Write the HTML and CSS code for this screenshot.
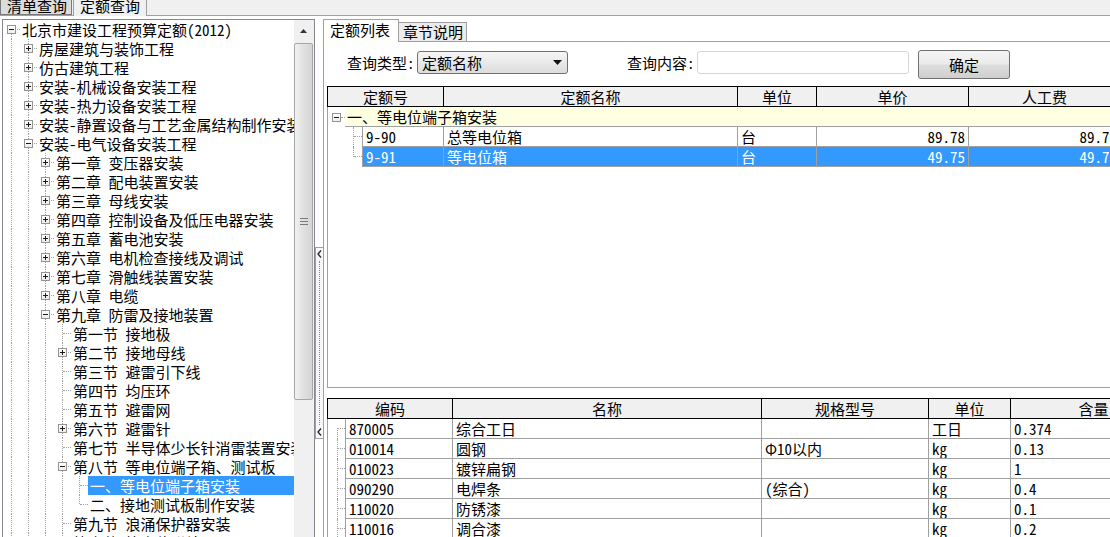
FILE: index.html
```html
<!DOCTYPE html>
<html lang="zh-CN">
<head>
<meta charset="utf-8">
<title>定额查询</title>
<link rel="stylesheet" href="styles.css">
</head>
<body>
<div class="topbar">
  <div class="ttab ttab-off">清单查询</div>
  <div class="ttab ttab-on">定额查询</div>
</div>
<div class="main">
  <div class="left">
    <div class="tree">
      <div class="row"><span class="c first"><b class="bx"></b></span><span class="lbl">北京市建设工程预算定额(2012)</span></div>
      <div class="row"><i class="g"></i><span class="c"><b class="bx plus"></b></span><span class="lbl">房屋建筑与装饰工程</span></div>
      <div class="row"><i class="g"></i><span class="c"><b class="bx plus"></b></span><span class="lbl">仿古建筑工程</span></div>
      <div class="row"><i class="g"></i><span class="c"><b class="bx plus"></b></span><span class="lbl">安装-机械设备安装工程</span></div>
      <div class="row"><i class="g"></i><span class="c"><b class="bx plus"></b></span><span class="lbl">安装-热力设备安装工程</span></div>
      <div class="row"><i class="g"></i><span class="c"><b class="bx plus"></b></span><span class="lbl">安装-静置设备与工艺金属结构制作安装工程</span></div>
      <div class="row"><i class="g"></i><span class="c"><b class="bx"></b></span><span class="lbl">安装-电气设备安装工程</span></div>
      <div class="row"><i class="g"></i><i class="g"></i><span class="c"><b class="bx plus"></b></span><span class="lbl">第一章 变压器安装</span></div>
      <div class="row"><i class="g"></i><i class="g"></i><span class="c"><b class="bx plus"></b></span><span class="lbl">第二章 配电装置安装</span></div>
      <div class="row"><i class="g"></i><i class="g"></i><span class="c"><b class="bx plus"></b></span><span class="lbl">第三章 母线安装</span></div>
      <div class="row"><i class="g"></i><i class="g"></i><span class="c"><b class="bx plus"></b></span><span class="lbl">第四章 控制设备及低压电器安装</span></div>
      <div class="row"><i class="g"></i><i class="g"></i><span class="c"><b class="bx plus"></b></span><span class="lbl">第五章 蓄电池安装</span></div>
      <div class="row"><i class="g"></i><i class="g"></i><span class="c"><b class="bx plus"></b></span><span class="lbl">第六章 电机检查接线及调试</span></div>
      <div class="row"><i class="g"></i><i class="g"></i><span class="c"><b class="bx plus"></b></span><span class="lbl">第七章 滑触线装置安装</span></div>
      <div class="row"><i class="g"></i><i class="g"></i><span class="c"><b class="bx plus"></b></span><span class="lbl">第八章 电缆</span></div>
      <div class="row"><i class="g"></i><i class="g"></i><span class="c"><b class="bx"></b></span><span class="lbl">第九章 防雷及接地装置</span></div>
      <div class="row"><i class="g"></i><i class="g"></i><i class="g"></i><span class="c"></span><span class="lbl">第一节 接地极</span></div>
      <div class="row"><i class="g"></i><i class="g"></i><i class="g"></i><span class="c"><b class="bx plus"></b></span><span class="lbl">第二节 接地母线</span></div>
      <div class="row"><i class="g"></i><i class="g"></i><i class="g"></i><span class="c"></span><span class="lbl">第三节 避雷引下线</span></div>
      <div class="row"><i class="g"></i><i class="g"></i><i class="g"></i><span class="c"></span><span class="lbl">第四节 均压环</span></div>
      <div class="row"><i class="g"></i><i class="g"></i><i class="g"></i><span class="c"></span><span class="lbl">第五节 避雷网</span></div>
      <div class="row"><i class="g"></i><i class="g"></i><i class="g"></i><span class="c"><b class="bx plus"></b></span><span class="lbl">第六节 避雷针</span></div>
      <div class="row"><i class="g"></i><i class="g"></i><i class="g"></i><span class="c"></span><span class="lbl">第七节 半导体少长针消雷装置安装</span></div>
      <div class="row"><i class="g"></i><i class="g"></i><i class="g"></i><span class="c"><b class="bx"></b></span><span class="lbl">第八节 等电位端子箱、测试板</span></div>
      <div class="row"><i class="g"></i><i class="g"></i><i class="g"></i><i class="g"></i><span class="c"></span><span class="lbl sel">一、等电位端子箱安装</span></div>
      <div class="row"><i class="g"></i><i class="g"></i><i class="g"></i><i class="g"></i><span class="c last"></span><span class="lbl">二、接地测试板制作安装</span></div>
      <div class="row"><i class="g"></i><i class="g"></i><i class="g"></i><span class="c"></span><span class="lbl">第九节 浪涌保护器安装</span></div>
      <div class="row"><i class="g"></i><i class="g"></i><i class="g"></i><span class="c"></span><span class="lbl">第十节 等电位联结</span></div>
    </div>
    <div class="sb">
      <div class="sb-up"><svg width="7" height="4" viewBox="0 0 7 4"><polygon points="0,4 7,4 3.5,0" fill="#333"/></svg></div>
      <div class="sb-thumb"><svg width="8" height="7" viewBox="0 0 8 7"><path d="M0 0.5H8M0 3.5H8M0 6.5H8" stroke="#7a7a7a" stroke-width="1"/></svg></div>
      <div class="sb-track"></div>
    </div>
  </div>
  <div class="splitter">
    <div class="split-box">
      <svg class="chev" width="5" height="8" viewBox="0 0 5 8"><polyline points="4,0.5 1,4 4,7.5" fill="none" stroke="#222" stroke-width="1.3"/></svg>
      <div class="split-dots"></div>
      <svg class="chev" width="5" height="8" viewBox="0 0 5 8"><polyline points="4,0.5 1,4 4,7.5" fill="none" stroke="#222" stroke-width="1.3"/></svg>
    </div>
  </div>
  <div class="right">
    <div class="rtabs">
      <div class="rt-on">定额列表</div>
      <div class="rt-off">章节说明</div>
    </div>
    <div class="rcontent">
      <div class="query">
        <div class="qlabel">查询类型:</div>
        <div class="select"><span>定额名称</span><svg width="9" height="5" viewBox="0 0 9 5"><polygon points="0,0 9,0 4.5,5" fill="#111"/></svg></div>
        <div class="qlabel qlabel2">查询内容:</div>
        <div class="input"></div>
        <div class="btn">确定</div>
      </div>

      <div class="tgrid">
        <div class="hdr">
          <div class="tc1">定额号</div>
          <div class="tc2">定额名称</div>
          <div class="tc3">单位</div>
          <div class="tc4">单价</div>
          <div class="tc5">人工费</div>
        </div>
        <div class="trow">
          <div class="gut-grp"><b class="bx"></b></div>
          <div class="grp">一、等电位端子箱安装</div>
        </div>
        <div class="trow">
          <div class="gut2"></div>
          <div class="cell tc1 dl">9-90</div>
          <div class="cell tc2">总等电位箱</div>
          <div class="cell tc3">台</div>
          <div class="cell tc4 num">89.78</div>
          <div class="cell tc5 num">89.78</div>
        </div>
        <div class="trow sel">
          <div class="gut2 last"></div>
          <div class="cell tc1 dl">9-91</div>
          <div class="cell tc2">等电位箱</div>
          <div class="cell tc3">台</div>
          <div class="cell tc4 num">49.75</div>
          <div class="cell tc5 num">49.75</div>
        </div>
        <div class="tfill"></div>
      </div>

      <div class="bgrid">
        <div class="hdr">
          <div class="bc1">编码</div>
          <div class="bc2">名称</div>
          <div class="bc3">规格型号</div>
          <div class="bc4">单位</div>
          <div class="bc5">含量</div>
        </div>
        <div class="trow">
          <div class="gut1 first"></div>
          <div class="cell bc1 dl">870005</div>
          <div class="cell bc2">综合工日</div>
          <div class="cell bc3"></div>
          <div class="cell bc4">工日</div>
          <div class="cell bc5">0.374</div>
        </div>
        <div class="trow">
          <div class="gut1"></div>
          <div class="cell bc1 dl">010014</div>
          <div class="cell bc2">圆钢</div>
          <div class="cell bc3">Φ10以内</div>
          <div class="cell bc4">kg</div>
          <div class="cell bc5">0.13</div>
        </div>
        <div class="trow">
          <div class="gut1"></div>
          <div class="cell bc1 dl">010023</div>
          <div class="cell bc2">镀锌扁钢</div>
          <div class="cell bc3"></div>
          <div class="cell bc4">kg</div>
          <div class="cell bc5">1</div>
        </div>
        <div class="trow">
          <div class="gut1"></div>
          <div class="cell bc1 dl">090290</div>
          <div class="cell bc2">电焊条</div>
          <div class="cell bc3">(综合)</div>
          <div class="cell bc4">kg</div>
          <div class="cell bc5">0.4</div>
        </div>
        <div class="trow">
          <div class="gut1"></div>
          <div class="cell bc1 dl">110020</div>
          <div class="cell bc2">防锈漆</div>
          <div class="cell bc3"></div>
          <div class="cell bc4">kg</div>
          <div class="cell bc5">0.1</div>
        </div>
        <div class="trow">
          <div class="gut1"></div>
          <div class="cell bc1 dl">110016</div>
          <div class="cell bc2">调合漆</div>
          <div class="cell bc3"></div>
          <div class="cell bc4">kg</div>
          <div class="cell bc5">0.2</div>
        </div>
      </div>
    </div>
  </div>
</div>
</body>
</html>
```
FILE: styles.css
```css
* { box-sizing: border-box; }
html, body { margin: 0; padding: 0; }
body {
  width: 1110px;
  height: 537px;
  overflow: hidden;
  background: #fff;
  color: #000;
  font-family: "Noto Sans Mono CJK SC", "Noto Sans CJK SC", sans-serif;
  font-size: 15px;
}

/* top tab bar */
.topbar {
  height: 16px;
  background: #f0f0f0;
  border-bottom: 1px solid #a0a0a0;
  display: flex;
  align-items: flex-start;
}
.ttab {
  height: 15px;
  line-height: 11px;
  white-space: nowrap;
  overflow: hidden;
  flex: none;
}
.ttab-off {
  width: 72px;
  padding-left: 6px;
  background: #dcdcdc;
  border: 1px solid #7a7a7a;
  border-top: none;
}
.ttab-on {
  width: 74px;
  height: 16px;
  margin-left: 1px;
  padding-left: 6px;
  background: #f0f0f0;
  border-left: 1px solid #a0a0a0;
  border-right: 1px solid #a0a0a0;
}

.main {
  display: flex;
  height: 521px;
  padding-top: 3px;
}

/* left tree */
.left {
  flex: none;
  margin-left: 2px;
  width: 313px;
  border: 1px solid #828790;
  border-bottom: none;
  display: flex;
}
.tree {
  width: 291px;
  flex: none;
  overflow: hidden;
  background: #fff;
}
.row {
  display: flex;
  height: 19px;
  line-height: 19px;
  white-space: nowrap;
}
.g, .c {
  flex: none;
  width: 17px;
  position: relative;
}
.g::before, .c::before {
  content: "";
  position: absolute;
  left: 8px;
  top: 0;
  bottom: 0;
  border-left: 1px dotted #a0a0a0;
}
.c.first::before { top: 9px; }
.c.last::before { bottom: 10px; }
.c::after {
  content: "";
  position: absolute;
  left: 9px;
  right: 0;
  top: 9px;
  border-top: 1px dotted #a0a0a0;
}
.bx {
  position: absolute;
  left: 4px;
  top: 5px;
  width: 9px;
  height: 9px;
  border: 1px solid #949494;
  background: linear-gradient(#ffffff, #ececec);
  z-index: 1;
}
.bx::before {
  content: "";
  position: absolute;
  left: 1px;
  top: 3px;
  width: 5px;
  height: 1px;
  background: #1a1a1a;
}
.bx.plus::after {
  content: "";
  position: absolute;
  left: 3px;
  top: 1px;
  width: 1px;
  height: 5px;
  background: #1a1a1a;
}
.lbl { padding: 0 2px; }
.lbl.sel {
  flex: 1;
  background: #3399ff;
  color: #fff;
}

/* scrollbar */
.sb {
  width: 20px;
  flex: none;
  background: #f0f0f0;
  display: flex;
  flex-direction: column;
}
.sb-up {
  height: 22px;
  display: flex;
  align-items: center;
  justify-content: center;
  padding-right: 1px;
}
.sb-thumb {
  margin-top: 1px;
  margin-right: 1px;
  height: 357px;
  border: 1px solid #a6a6a6;
  border-radius: 2px;
  background: linear-gradient(to right, #f2f2f2, #e3e3e3 40%, #d4d4d4);
  display: flex;
  align-items: center;
  justify-content: center;
}
.sb-track { flex: 1; }

/* splitter */
.splitter {
  width: 8px;
  flex: none;
}
.split-box {
  margin-top: 228px;
  height: 192px;
  border: 1px solid #a0a0a0;
  border-right: none;
  background: #f7f7f7;
  display: flex;
  flex-direction: column;
  align-items: center;
  padding: 2px 0;
}
.chev { flex: none; }
.split-dots {
  flex: 1;
  margin: 3px 0;
  border-left: 1px dotted #5b8fd0;
}

/* right panel */
.right {
  flex: 1;
  min-width: 0;
  display: flex;
  flex-direction: column;
  overflow: hidden;
}
.rtabs {
  display: flex;
  align-items: flex-end;
  height: 22px;
  flex: none;
}
.rt-on {
  width: 76px;
  height: 23px;
  margin-bottom: -1px;
  padding-left: 6px;
  line-height: 20px;
  border: 1px solid #a0a0a0;
  border-bottom: none;
  background: #fff;
  position: relative;
  z-index: 1;
  white-space: nowrap;
}
.rt-off {
  width: 68px;
  height: 19px;
  padding-left: 4px;
  line-height: 18px;
  border: 1px solid #a0a0a0;
  border-left: none;
  border-bottom: none;
  background: #ececec;
  white-space: nowrap;
}
.rcontent {
  flex: 1;
  border-left: 1px solid #a0a0a0;
  border-top: 1px solid #a0a0a0;
  background: #fff;
  padding-left: 3px;
}

.query {
  display: flex;
  align-items: flex-start;
  margin-top: 8px;
  height: 29px;
  padding-left: 20px;
}
.qlabel {
  width: 70px;
  flex: none;
  margin-top: 1px;
  line-height: 23px;
  white-space: nowrap;
}
.qlabel2 { margin-left: 59px; }
.select {
  flex: none;
  width: 151px;
  height: 23px;
  margin-top: 1px;
  border: 1px solid #707070;
  border-radius: 3px;
  background: linear-gradient(#f6f6f6, #e9e9e9 50%, #dcdcdc);
  display: flex;
  align-items: center;
  justify-content: space-between;
  padding: 0 5px 0 4px;
  line-height: 21px;
}
.input {
  flex: none;
  width: 212px;
  height: 23px;
  margin-top: 1px;
  border: 1px solid #d6d6d6;
  border-radius: 3px;
  background: #fff;
}
.btn {
  flex: none;
  width: 92px;
  height: 29px;
  margin-left: 9px;
  border: 1px solid #707070;
  border-radius: 3px;
  background: linear-gradient(#f4f4f4, #ebebeb 48%, #dddddd 52%, #cfcfcf);
  text-align: center;
  line-height: 27px;
}

/* grids */
.tgrid {
  margin-top: 7px;
  width: 900px;
  height: 302px;
  display: flex;
  flex-direction: column;
  border-bottom: 1px solid #a0a0a0;
}
.bgrid {
  margin-top: 10px;
  width: 900px;
  display: flex;
  flex-direction: column;
}
.hdr {
  flex: none;
  display: flex;
  height: 21px;
  border: 1px solid #000;
  border-right: none;
  background: #f0f0f0;
}
.hdr > div {
  flex: none;
  border-right: 1px solid #000;
  text-align: center;
  line-height: 19px;
  white-space: nowrap;
}
.trow {
  flex: none;
  display: flex;
  height: 20px;
  border-left: 1px solid #a0a0a0;
}
.cell {
  flex: none;
  border-right: 1px solid #a0a0a0;
  border-bottom: 1px solid #a0a0a0;
  line-height: 19px;
  padding: 0 3px;
  white-space: nowrap;
  overflow: hidden;
}
.cell.dl { border-left: 1px solid #a0a0a0; }
.num { text-align: right; }

.hdr .tc1 { width: 116px; }
.tc2 { width: 294px; }
.tc3 { width: 79px; }
.tc4 { width: 152px; }
.tc5 { width: 152px; }
.cell.tc1 { width: 82px; }

.hdr .bc1 { width: 125px; }
.bc2 { width: 309px; }
.bc3 { width: 167px; }
.bc4 { width: 82px; }
.bc5 { width: 166px; }
.cell.bc1 { width: 108px; }

.trow.sel .cell {
  background: #3399ff;
  color: #fff;
}

.gut-grp {
  flex: none;
  width: 17px;
  position: relative;
}
.gut-grp::after {
  content: "";
  position: absolute;
  left: 13px;
  right: 0;
  top: 10px;
  border-top: 1px dotted #a0a0a0;
}
.gut-grp .bx { top: 6px; left: 4px; }
.grp {
  flex: 1;
  background: #ffffe1;
  border-bottom: 1px solid #a0a0a0;
  line-height: 19px;
  padding-left: 2px;
  white-space: nowrap;
}

.gut2, .gut1 {
  flex: none;
  position: relative;
}
.gut2 { width: 34px; }
.gut1 { width: 17px; }
.gut2::before, .gut1::before {
  content: "";
  position: absolute;
  top: 0;
  bottom: 0;
  border-left: 1px dotted #a0a0a0;
}
.gut2::before { left: 25px; }
.gut1::before { left: 9px; }
.gut2.last::before { bottom: 10px; }
.gut1.first::before { top: 9px; }
.gut2::after, .gut1::after {
  content: "";
  position: absolute;
  right: 0;
  top: 9px;
  border-top: 1px dotted #a0a0a0;
}
.gut2::after { left: 26px; }
.gut1::after { left: 10px; }
.tfill {
  flex: 1;
  border-left: 1px solid #a0a0a0;
}
```
